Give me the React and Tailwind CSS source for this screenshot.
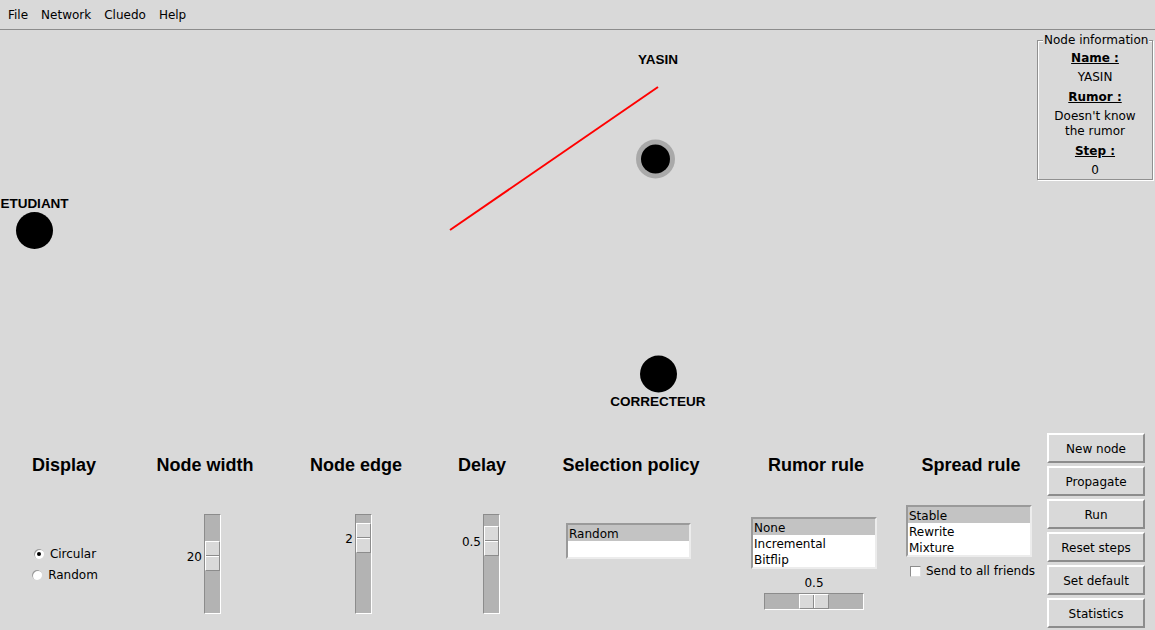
import React from 'react'

const menus = ['File', 'Network', 'Cluedo', 'Help']
const buttons = ['New node', 'Propagate', 'Run', 'Reset steps', 'Set default', 'Statistics']

const ui = "font-['DejaVu_Sans',Verdana,sans-serif] text-[12px] text-black"
const head = "font-['Liberation_Sans',Arial,sans-serif] font-bold text-[18px] leading-[21px] text-center"

function Heading({children}) {
  return <div className={head}>{children}</div>
}

// vertical tk scale: value label on the left of the trough
function VScale({value, thumb, label, className = ''}) {
  return (
    <div className={`mx-auto mt-[38px] flex w-[32px] ${className}`}>
      <div className="relative w-[15px]">
        <span className={`absolute right-[2px] ${label} leading-[16px] whitespace-nowrap`}>{value}</span>
      </div>
      <div className="relative h-[100px] w-[17px] border border-t-[#8c8c8c] border-l-[#8c8c8c] border-r-white border-b-white bg-[#b3b3b3]">
        <div className={`absolute left-0 ${thumb} flex h-[30px] w-[15px] flex-col border border-t-white border-l-white border-r-[#8c8c8c] border-b-[#8c8c8c] bg-[#d9d9d9]`}>
          <div className="flex-1" />
          <div className="h-px bg-[#8c8c8c]" />
          <div className="h-px bg-white" />
          <div className="flex-1" />
        </div>
      </div>
    </div>
  )
}

function ListBox({items, rows, className}) {
  return (
    <div className={`border-2 border-t-[#9a9a9a] border-l-[#9a9a9a] border-r-[#ececec] border-b-[#ececec] bg-white ${className}`}>
      {Array.from({length: rows}).map((_, i) => (
        <div key={i} className={`h-[16px] pl-[1px] leading-[16px] ${i === 0 ? 'bg-[#c3c3c3]' : ''}`}>
          <span className="relative top-px">{items[i] || ''}</span>
        </div>
      ))}
    </div>
  )
}

function Radio({checked, children}) {
  return (
    <div className="flex h-[21px] items-center justify-center gap-[6px]">
      <span className="flex h-[10px] w-[10px] items-center justify-center rounded-full bg-white shadow-[inset_1px_1px_0_#9a9a9a]">
        {checked && <span className="h-[4px] w-[4px] rounded-full bg-black" />}
      </span>
      <span>{children}</span>
    </div>
  )
}

function Canvas() {
  const label = "font-['Liberation_Sans',Arial,sans-serif] font-bold"
  return (
    <div className="relative flex-1">
      <svg width="100%" height="400" className="block">
        <line x1="450" y1="200" x2="658" y2="57" stroke="#ff0000" strokeWidth="2" />
        <text x="658" y="34" textAnchor="middle" fontSize="13.5" className={label}>YASIN</text>
        <circle cx="655.5" cy="129" r="19.5" fill="#a9a9a9" />
        <circle cx="655.5" cy="129" r="14.5" fill="#000" />
        <text x="34.5" y="178" textAnchor="middle" fontSize="13.5" className={label}>ETUDIANT</text>
        <circle cx="34.5" cy="200.5" r="18.5" fill="#000" />
        <circle cx="658.5" cy="344" r="18.5" fill="#000" />
        <text x="658" y="376" textAnchor="middle" fontSize="13.5" className={label}>CORRECTEUR</text>
      </svg>
    </div>
  )
}

function NodeInfo() {
  return (
    <div className="mr-[2px] w-[116px] pt-[10px]">
      <div className="relative h-[140px] border border-[#909090] text-center shadow-[inset_1px_1px_0_#fff,1px_1px_0_#fff]">
        <span className="absolute -top-[9px] left-[5px] bg-[#d9d9d9] px-px leading-[16px]">Node information</span>
        <div className="pt-[8px]">
          <div className="h-[19px] font-bold leading-[19px] underline">Name :</div>
          <div className="h-[19px] leading-[19px]">YASIN</div>
          <div className="h-[20px] font-bold leading-[20px] underline">Rumor :</div>
          <div className="mt-[2px] leading-[15px]">Doesn't know<br />the rumor</div>
          <div className="mt-[3px] h-[19px] font-bold leading-[19px] underline">Step :</div>
          <div className="h-[19px] leading-[19px]">0</div>
        </div>
      </div>
    </div>
  )
}

export default function App() {
  return (
    <div className={`${ui} flex h-[630px] w-[1155px] flex-col overflow-hidden bg-[#d9d9d9]`}>
      {/* menu bar */}
      <div className="flex h-[30px] items-center gap-px border-b border-[#8c8c8c] pl-[2px]">
        {menus.map((m) => (
          <span key={m} className="px-[6px] leading-[16px]">{m}</span>
        ))}
      </div>

      <div className="flex h-[400px]">
        <Canvas />
        <NodeInfo />
      </div>

      {/* controls */}
      <div className="flex flex-1">
        <div className="w-[128px] pt-[25px]">
          <Heading>Display</Heading>
          <div className="mt-[67px] pl-[2px]">
            <Radio checked>Circular</Radio>
            <Radio>Random</Radio>
          </div>
        </div>
        <div className="w-[154px] pt-[25px]">
          <Heading>Node width</Heading>
          <VScale value="20" thumb="top-[26px]" label="top-[35px]" />
        </div>
        <div className="w-[148px] pt-[25px]">
          <Heading>Node edge</Heading>
          <VScale value="2" thumb="top-[8px]" label="top-[17px]" />
        </div>
        <div className="w-[104px] pt-[25px]">
          <Heading>Delay</Heading>
          <VScale value="0.5" thumb="top-[11px]" label="top-[20px]" className="relative left-[2px]" />
        </div>
        <div className="w-[194px] pt-[25px]">
          <Heading>Selection policy</Heading>
          <ListBox items={['Random']} rows={2} className="mt-[47px] ml-[32px] w-[125px]" />
        </div>
        <div className="w-[176px] pt-[25px]">
          <Heading>Rumor rule</Heading>
          <ListBox items={['None', 'Incremental', 'Bitflip']} rows={3} className="mt-[41px] ml-[23px] w-[126px]" />
          <div className="mt-[6px] ml-[36px] w-[100px] text-center leading-[16px]">0.5</div>
          <div className="relative mt-[2px] ml-[36px] h-[17px] w-[100px] border border-t-[#8c8c8c] border-l-[#8c8c8c] border-r-white border-b-white bg-[#b3b3b3]">
            <div className="absolute left-[34px] top-0 flex h-[15px] w-[30px] border border-t-white border-l-white border-r-[#8c8c8c] border-b-[#8c8c8c] bg-[#d9d9d9]">
              <div className="flex-1" />
              <div className="w-px bg-[#8c8c8c]" />
              <div className="w-px bg-white" />
              <div className="flex-1" />
            </div>
          </div>
        </div>
        <div className="w-[134px] pt-[25px]">
          <Heading>Spread rule</Heading>
          <ListBox items={['Stable', 'Rewrite', 'Mixture']} rows={3} className="mt-[29px] ml-[2px] w-[126px]" />
          <div className="mt-[6px] ml-[6px] flex h-[16px] items-center gap-[5px] whitespace-nowrap">
            <span className="h-[11px] w-[11px] border border-t-[#8c8c8c] border-l-[#8c8c8c] border-r-[#e0e0e0] border-b-[#e0e0e0] bg-white" />
            <span>Send to all friends</span>
          </div>
        </div>
        <div className="ml-[9px] flex w-[98px] flex-col gap-[3px] pt-[3px]">
          {buttons.map((b) => (
            <div
              key={b}
              className="flex h-[30px] items-center justify-center border-2 border-t-white border-l-white border-r-[#8c8c8c] border-b-[#8c8c8c] bg-[#d9d9d9] pt-[2px]"
            >
              {b}
            </div>
          ))}
        </div>
      </div>
    </div>
  )
}
